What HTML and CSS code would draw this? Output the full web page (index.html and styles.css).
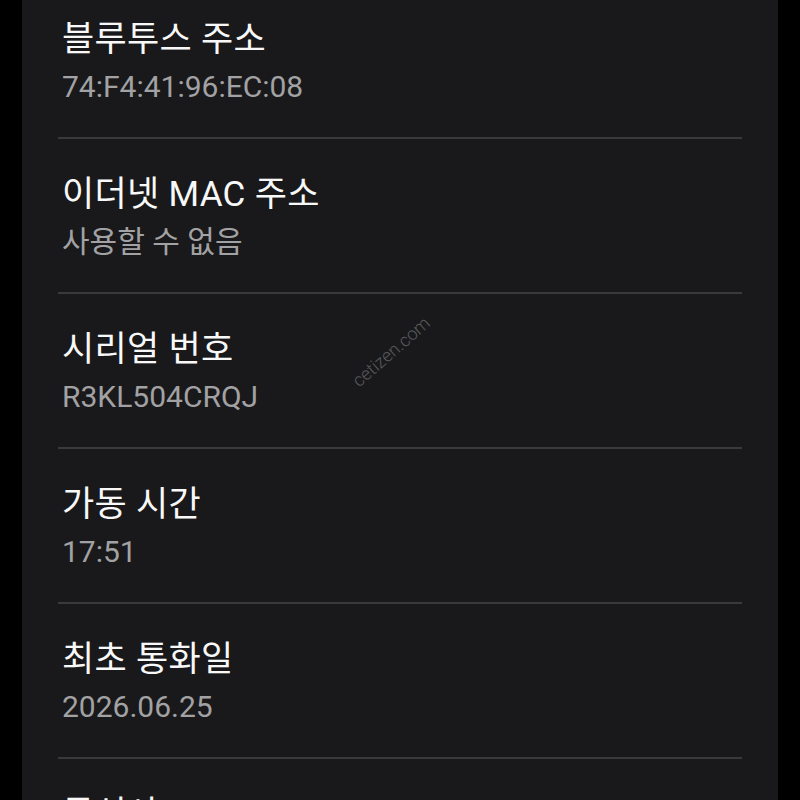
FILE: index.html
```html
<!DOCTYPE html>
<html lang="ko">
<head>
    <meta charset="UTF-8">
    <meta name="viewport" content="width=device-width, initial-scale=1.0">
    <title>휴대전화 정보 - 상태</title>
    <link rel="stylesheet" href="styles.css">
</head>
<body>
    <div class="card">
        <ul class="info-list">
            <li class="info-item">
                <p class="info-title">블루투스 주소</p>
                <p class="info-value">74:F4:41:96:EC:08</p>
            </li>
            <li class="info-item">
                <p class="info-title">이더넷 MAC 주소</p>
                <p class="info-value">사용할 수 없음</p>
            </li>
            <li class="info-item">
                <p class="info-title">시리얼 번호</p>
                <p class="info-value">R3KL504CRQJ</p>
            </li>
            <li class="info-item">
                <p class="info-title">가동 시간</p>
                <p class="info-value">17:51</p>
            </li>
            <li class="info-item">
                <p class="info-title">최초 통화일</p>
                <p class="info-value">2026.06.25</p>
            </li>
            <li class="info-item">
                <p class="info-title">통신사</p>
                <p class="info-value">SKTelecom</p>
            </li>
        </ul>
    </div>
    <div class="watermark">cetizen.com</div>
</body>
</html>
```

FILE: styles.css
```css
body {
    margin: 0;
    background: #000;
    font-family: Roboto, "Noto Sans CJK KR", sans-serif;
    height: 800px;
    overflow: hidden;
}
.card {
    background: #19191b;
    margin: 0 22px;
    padding: 0 36px;
    min-height: 800px;
}
.info-list {
    list-style: none;
    margin: 0;
    padding: 0;
    margin-top: -16px;
}
.info-item {
    padding: 34px 4px 30px;
    border-bottom: 2px solid #3a3a3c;
}
.info-title {
    margin: 0;
    font-size: 35px;
    line-height: 44px;
    letter-spacing: 0.3px;
    color: #f8f8f8;
}
.info-value {
    margin: 5px 0 0;
    font-size: 30px;
    line-height: 40px;
    color: #a2a2a4;
}
.watermark {
    position: absolute;
    left: 343px;
    top: 341px;
    font-size: 18px;
    color: #6a6a6c;
    opacity: 0.8;
    transform: rotate(-41deg);
    font-weight: 300;
}
```
